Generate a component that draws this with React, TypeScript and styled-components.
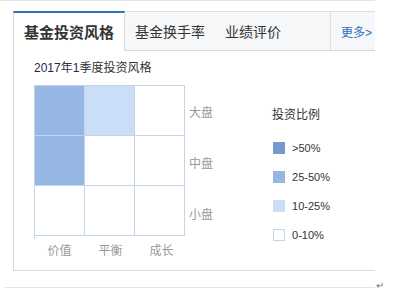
import React from 'react';
import styled, { createGlobalStyle } from 'styled-components';

const GlobalStyle = createGlobalStyle`
  body {
    margin: 0;
    background: #fff;
    font-family: 'Liberation Sans', 'Noto Sans CJK SC', sans-serif;
    color: #333;
  }
`;

const SPage = styled.div`
  width: 375px;
  border-top: 1px solid #e3e3e3;
  padding-top: 10px;
`;

const SCard = styled.section`
  margin-left: 13px;
  width: 362px;
`;

const STabBar = styled.div`
  display: flex;
  align-items: stretch;
  height: 40px;
  box-sizing: border-box;
  background: #f6f7f9;
  border-top: 1px solid #dedfe1;
  border-bottom: 1px solid #d6d7d9;
`;

const STab = styled.div<{ $active?: boolean }>`
  display: flex;
  align-items: center;
  padding: 0 10px;
  font-size: ${(p) => (p.$active ? '15px' : '14px')};
  font-weight: ${(p) => (p.$active ? 'bold' : 'normal')};
  color: #333;
  white-space: nowrap;
  ${(p) =>
    p.$active &&
    `
    margin: -1px 0 -1px 0;
    background: #fff;
    border-top: 2px solid #2f6fbd;
    border-left: 1px solid #d6d7d9;
    border-right: 1px solid #d6d7d9;
    padding-bottom: 1px;
  `}
`;

const SMore = styled.a`
  margin-left: auto;
  width: 45px;
  box-sizing: border-box;
  display: flex;
  align-items: center;
  padding-left: 10px;
  border-left: 1px solid #dedfe1;
  color: #2e6cbf;
  font-size: 12px;
  text-decoration: none;
  white-space: nowrap;
`;

const SPanel = styled.div`
  border-left: 1px solid #d6d7d9;
  border-bottom: 1px solid #dcdcdc;
  padding: 9px 0 11px 20px;
  display: flex;
`;

const SChartBlock = styled.div`
  display: flex;
  flex-direction: column;
`;

const SSubtitle = styled.div`
  font-size: 12px;
  line-height: 16px;
  color: #333;
  height: 16px;

  b {
    font-weight: normal;
    color: #2a2450;
  }
`;

const SChartRow = styled.div`
  display: flex;
  margin-top: 9px;
`;

const SGrid = styled.div`
  display: grid;
  grid-template-columns: repeat(3, 50px);
  grid-auto-rows: 50px;
  border-top: 1px solid #c4d5e7;
  border-left: 1px solid #c4d5e7;
`;

const SCell = styled.div<{ $fill: string }>`
  background: ${(p) => p.$fill};
  border-right: 1px solid #c4d5e7;
  border-bottom: 1px solid #c4d5e7;
`;

const SYAxis = styled.div`
  display: grid;
  grid-auto-rows: 51px;
  margin-left: 4px;
  margin-top: 1px;
`;

const SAxisLabel = styled.div`
  display: flex;
  align-items: center;
  justify-content: center;
  font-size: 12px;
  color: #999;
  white-space: nowrap;
`;

const SXAxis = styled.div`
  display: grid;
  grid-template-columns: repeat(3, 51px);
  margin-top: 4px;
  height: 16px;
  line-height: 16px;
`;

const SLegend = styled.div`
  margin-left: 59px;
  padding-top: 47px;
`;

const SLegendTitle = styled.div`
  font-size: 12px;
  line-height: 16px;
  color: #333;
  margin-bottom: 10px;
`;

const SLegendItem = styled.div`
  display: flex;
  align-items: center;
  height: 29px;
  gap: 7px;
  font-size: 11px;
  color: #333;
`;

const SSwatch = styled.span<{ $fill: string; $outlined?: boolean }>`
  display: inline-block;
  width: 12px;
  height: 12px;
  margin-left: 1px;
  box-sizing: border-box;
  background: ${(p) => p.$fill};
  border: ${(p) => (p.$outlined ? '1px solid #c4d5e7' : 'none')};
`;

const SFoot = styled.div`
  display: flex;
  align-items: flex-end;
  margin-top: 10px;
  width: 390px;
`;

const SRule = styled.div`
  margin-left: 5px;
  width: 370px;
  height: 1px;
  background: #e3e3e3;
`;

const SReturn = styled.span`
  font-size: 10px;
  line-height: 10px;
  color: #777;
  margin-left: 1px;
  margin-bottom: -3px;
`;

const COLORS = {
  high: '#7399cf',
  mid: '#96b7e3',
  low: '#cadef7',
  none: '#fff',
};

const cells: string[] = [
  COLORS.mid, COLORS.low, COLORS.none,
  COLORS.mid, COLORS.none, COLORS.none,
  COLORS.none, COLORS.none, COLORS.none,
];

const legend = [
  { label: '>50%', fill: COLORS.high },
  { label: '25-50%', fill: COLORS.mid },
  { label: '10-25%', fill: COLORS.low },
  { label: '0-10%', fill: COLORS.none, outlined: true },
];

const App = () => {
  return (
    <>
      <GlobalStyle />
      <SPage>
        <SCard>
          <STabBar>
            <STab $active>基金投资风格</STab>
            <STab>基金换手率</STab>
            <STab>业绩评价</STab>
            <SMore href="#">更多&gt;</SMore>
          </STabBar>
          <SPanel>
            <SChartBlock>
              <SSubtitle>
                <b>2017</b>年<b>1</b>季度投资风格
              </SSubtitle>
              <SChartRow>
                <SGrid>
                  {cells.map((c, i) => (
                    <SCell key={i} $fill={c} />
                  ))}
                </SGrid>
                <SYAxis>
                  <SAxisLabel>大盘</SAxisLabel>
                  <SAxisLabel>中盘</SAxisLabel>
                  <SAxisLabel>小盘</SAxisLabel>
                </SYAxis>
              </SChartRow>
              <SXAxis>
                <SAxisLabel>价值</SAxisLabel>
                <SAxisLabel>平衡</SAxisLabel>
                <SAxisLabel>成长</SAxisLabel>
              </SXAxis>
            </SChartBlock>
            <SLegend>
              <SLegendTitle>投资比例</SLegendTitle>
              {legend.map((l) => (
                <SLegendItem key={l.label}>
                  <SSwatch $fill={l.fill} $outlined={l.outlined} />
                  {l.label}
                </SLegendItem>
              ))}
            </SLegend>
          </SPanel>
        </SCard>
        <SFoot>
          <SRule />
          <SReturn>↵</SReturn>
        </SFoot>
      </SPage>
    </>
  );
};

export default App;
